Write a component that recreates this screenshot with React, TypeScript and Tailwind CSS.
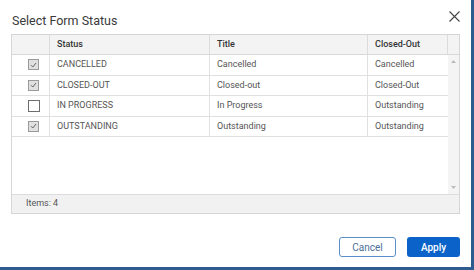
import React from "react";

const rows = [
  { checked: true, status: "CANCELLED", title: "Cancelled", closed: "Cancelled" },
  { checked: true, status: "CLOSED-OUT", title: "Closed-out", closed: "Closed-Out" },
  { checked: false, status: "IN PROGRESS", title: "In Progress", closed: "Outstanding" },
  { checked: true, status: "OUTSTANDING", title: "Outstanding", closed: "Outstanding" },
];

function Check({ checked }: { checked: boolean }) {
  if (!checked) {
    return <div className="w-[12px] h-[12px] border border-[#6f6f6f] bg-white" />;
  }
  return (
    <div className="w-[11px] h-[11px] border border-[#9a9a9a] bg-[#e0e0e0] flex items-center justify-center">
      <svg width="7" height="6" viewBox="0 0 7 6" fill="none">
        <path d="M1 3.2 L2.8 5 L6 1" stroke="#666" strokeWidth="1" />
      </svg>
    </div>
  );
}

export default function App() {
  return (
    <div
      className="w-[474px] h-[270px] bg-white border-r-[3px] border-b-[3px] border-[#2f5c8f] flex flex-col"
      style={{ fontFamily: "Roboto, 'Liberation Sans', sans-serif" }}
    >
      <div className="h-[34px] flex items-start justify-between pl-[12px] pr-[11px]">
        <div className="mt-[13px] text-[12.5px] leading-[16px] text-[#3a3a3a]">Select Form Status</div>
        <svg className="mt-[11px]" width="11" height="11" viewBox="0 0 11 11">
          <path d="M0.5 0.5 L10.5 10.5 M10.5 0.5 L0.5 10.5" stroke="#444" strokeWidth="1.1" />
        </svg>
      </div>
      <div className="ml-[11px] w-[449px] h-[180px] border border-[#d6d6d6] flex flex-col text-[9px] text-[#555]">
        <div className="h-[20px] flex bg-[#f3f3f3] border-b border-[#d9d9d9] font-medium text-[#333] shrink-0">
          <div className="w-[38px] border-r border-[#dcdcdc]" />
          <div className="w-[160px] border-r border-[#dcdcdc] flex items-center pl-[7px]">Status</div>
          <div className="w-[158px] border-r border-[#dcdcdc] flex items-center pl-[7px]">Title</div>
          <div className="w-[80px] border-r border-[#dcdcdc] flex items-center pl-[7px]">Closed-Out</div>
          <div className="flex-1" />
        </div>
        <div className="flex-1 flex min-h-0">
          <div className="w-[436px] flex flex-col">
            {rows.map((r) => (
              <div key={r.status} className="h-[20.5px] flex border-b border-[#e0e0e0]">
                <div className="w-[38px] border-r border-[#e0e0e0] flex items-center justify-center pl-[6px]">
                  <Check checked={r.checked} />
                </div>
                <div className="w-[160px] border-r border-[#e0e0e0] flex items-center pl-[7px]">{r.status}</div>
                <div className="w-[158px] border-r border-[#e0e0e0] flex items-center pl-[7px]">{r.title}</div>
                <div className="flex-1 flex items-center pl-[7px]">{r.closed}</div>
              </div>
            ))}
          </div>
          <div className="flex-1 bg-[#f4f4f4] flex flex-col items-center justify-between py-[5px]">
            <svg width="5" height="3" viewBox="0 0 5 3"><path d="M0 3 L2.5 0 L5 3 Z" fill="#bbb" /></svg>
            <svg width="5" height="3" viewBox="0 0 5 3"><path d="M0 0 L2.5 3 L5 0 Z" fill="#bbb" /></svg>
          </div>
        </div>
        <div className="h-[19px] bg-[#f1f1f1] border-t border-[#dcdcdc] flex items-center pl-[14px] shrink-0 text-[#555]">
          Items: 4
        </div>
      </div>
      <div className="flex justify-end gap-[11px] pr-[11px] mt-[23px]">
        <button className="w-[57px] h-[20px] rounded-[3px] border border-[#5b8fc9] text-[#4a6f9a] text-[10px] bg-white">
          Cancel
        </button>
        <button className="w-[53px] h-[20px] rounded-[3px] bg-[#0b63c9] text-white font-medium text-[10px]">
          Apply
        </button>
      </div>
    </div>
  );
}
